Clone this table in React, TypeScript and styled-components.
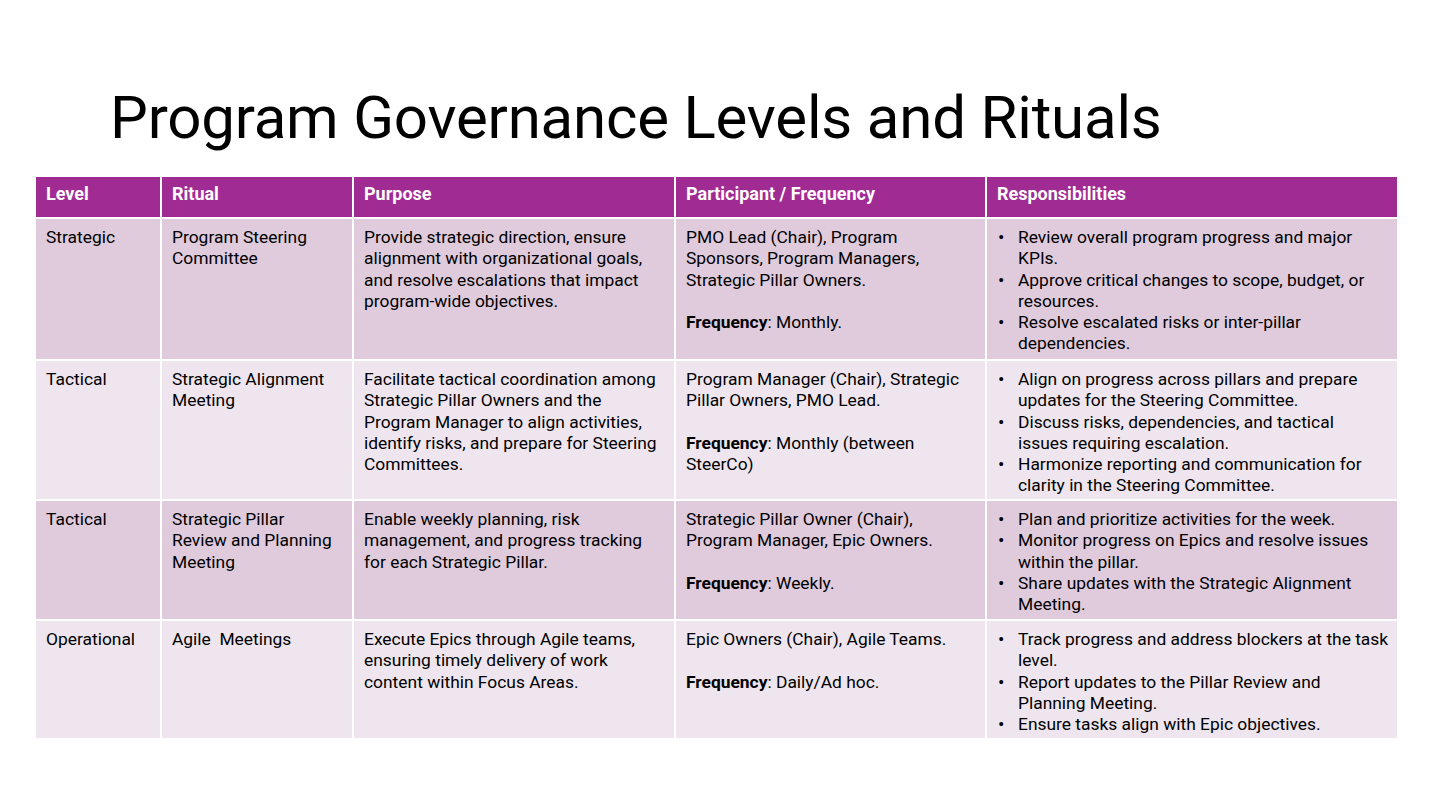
import styled, { createGlobalStyle } from "styled-components";

const GlobalStyle = createGlobalStyle`
  html, body {
    margin: 0;
    padding: 0;
    background: #ffffff;
  }
  body {
    font-family: Roboto, "Liberation Sans", sans-serif;
    color: #000000;
  }
`;

const Slide = styled.div`
  width: 1440px;
  height: 810px;
  box-sizing: border-box;
  padding: 83px 0 0 36px;
  background: #ffffff;
`;

const Title = styled.h1`
  margin: 0 0 24px 74px;
  font-size: 60px;
  font-weight: 400;
  line-height: 70px;
  letter-spacing: -0.2px;
  white-space: nowrap;
`;

const Grid = styled.div`
  display: grid;
  grid-template-columns: 124px 190px 320px 309px 410px;
  grid-template-rows: 40px 140px 138px 118px 117px;
  gap: 2px;
  width: 1361px;
  background: #ffffff;
`;

const HeadCell = styled.div`
  background: #a02b93;
  color: #ffffff;
  font-weight: 700;
  font-size: 18px;
  line-height: 21px;
  padding: 6px 10px 0;
  white-space: nowrap;
`;

const Cell = styled.div<{ $band: boolean }>`
  background: ${(p) => (p.$band ? "#dfcbdc" : "#efe5ee")};
  font-size: 17.4px;
  line-height: 21.3px;
  padding: 8px 10px 0;
  overflow: hidden;
`;

const Line = styled.div`
  white-space: pre;
`;

const Gap = styled.div`
  height: 21.3px;
`;

const BulletList = styled.ul`
  list-style: none;
  margin: 0;
  padding: 0;
`;

const Bullet = styled.li`
  position: relative;
  padding-left: 21px;
  &::before {
    content: "•";
    position: absolute;
    left: 1px;
    top: 0;
    font-size: 19px;
  }
`;

interface RowData {
  level: string[];
  ritual: string[];
  purpose: string[];
  participants: string[];
  frequency: string[];
  resp: string[][];
}

const rows: RowData[] = [
  {
    level: ["Strategic"],
    ritual: ["Program Steering", "Committee"],
    purpose: [
      "Provide strategic direction, ensure",
      "alignment with organizational goals,",
      "and resolve escalations that impact",
      "program-wide objectives.",
    ],
    participants: [
      "PMO Lead (Chair), Program",
      "Sponsors, Program Managers,",
      "Strategic Pillar Owners.",
    ],
    frequency: ["Monthly."],
    resp: [
      ["Review overall program progress and major", "KPIs."],
      ["Approve critical changes to scope, budget, or", "resources."],
      ["Resolve escalated risks or inter-pillar", "dependencies."],
    ],
  },
  {
    level: ["Tactical"],
    ritual: ["Strategic Alignment", "Meeting"],
    purpose: [
      "Facilitate tactical coordination among",
      "Strategic Pillar Owners and the",
      "Program Manager to align activities,",
      "identify risks, and prepare for Steering",
      "Committees.",
    ],
    participants: ["Program Manager (Chair), Strategic", "Pillar Owners, PMO Lead."],
    frequency: ["Monthly (between", "SteerCo)"],
    resp: [
      ["Align on progress across pillars and prepare", "updates for the Steering Committee."],
      ["Discuss risks, dependencies, and tactical", "issues requiring escalation."],
      ["Harmonize reporting and communication for", "clarity in the Steering Committee."],
    ],
  },
  {
    level: ["Tactical"],
    ritual: ["Strategic Pillar", "Review and Planning", "Meeting"],
    purpose: [
      "Enable weekly planning, risk",
      "management, and progress tracking",
      "for each Strategic Pillar.",
    ],
    participants: ["Strategic Pillar Owner (Chair),", "Program Manager, Epic Owners."],
    frequency: ["Weekly."],
    resp: [
      ["Plan and prioritize activities for the week."],
      ["Monitor progress on Epics and resolve issues", "within the pillar."],
      ["Share updates with the Strategic Alignment", "Meeting."],
    ],
  },
  {
    level: ["Operational"],
    ritual: ["Agile  Meetings"],
    purpose: [
      "Execute Epics through Agile teams,",
      "ensuring timely delivery of work",
      "content within Focus Areas.",
    ],
    participants: ["Epic Owners (Chair), Agile Teams."],
    frequency: ["Daily/Ad hoc."],
    resp: [
      ["Track progress and address blockers at the task", "level."],
      ["Report updates to the Pillar Review and", "Planning Meeting."],
      ["Ensure tasks align with Epic objectives."],
    ],
  },
];

const headers = ["Level", "Ritual", "Purpose", "Participant / Frequency", "Responsibilities"];

function Lines({ items }: { items: string[] }) {
  return (
    <>
      {items.map((t, i) => (
        <Line key={i}>{t}</Line>
      ))}
    </>
  );
}

export default function App() {
  return (
    <Slide>
      <GlobalStyle />
      <Title>Program Governance Levels and Rituals</Title>
      <Grid>
        {headers.map((h) => (
          <HeadCell key={h}>{h}</HeadCell>
        ))}
        {rows.map((r, i) => {
          const band = i % 2 === 0;
          return [
            <Cell $band={band} key={`l${i}`}>
              <Lines items={r.level} />
            </Cell>,
            <Cell $band={band} key={`r${i}`}>
              <Lines items={r.ritual} />
            </Cell>,
            <Cell $band={band} key={`p${i}`}>
              <Lines items={r.purpose} />
            </Cell>,
            <Cell $band={band} key={`f${i}`}>
              <Lines items={r.participants} />
              <Gap />
              {r.frequency.map((t, k) => (
                <Line key={k}>
                  {k === 0 ? (
                    <>
                      <b>Frequency</b>: {t}
                    </>
                  ) : (
                    t
                  )}
                </Line>
              ))}
            </Cell>,
            <Cell $band={band} key={`s${i}`}>
              <BulletList>
                {r.resp.map((b, k) => (
                  <Bullet key={k}>
                    <Lines items={b} />
                  </Bullet>
                ))}
              </BulletList>
            </Cell>,
          ];
        })}
      </Grid>
    </Slide>
  );
}
